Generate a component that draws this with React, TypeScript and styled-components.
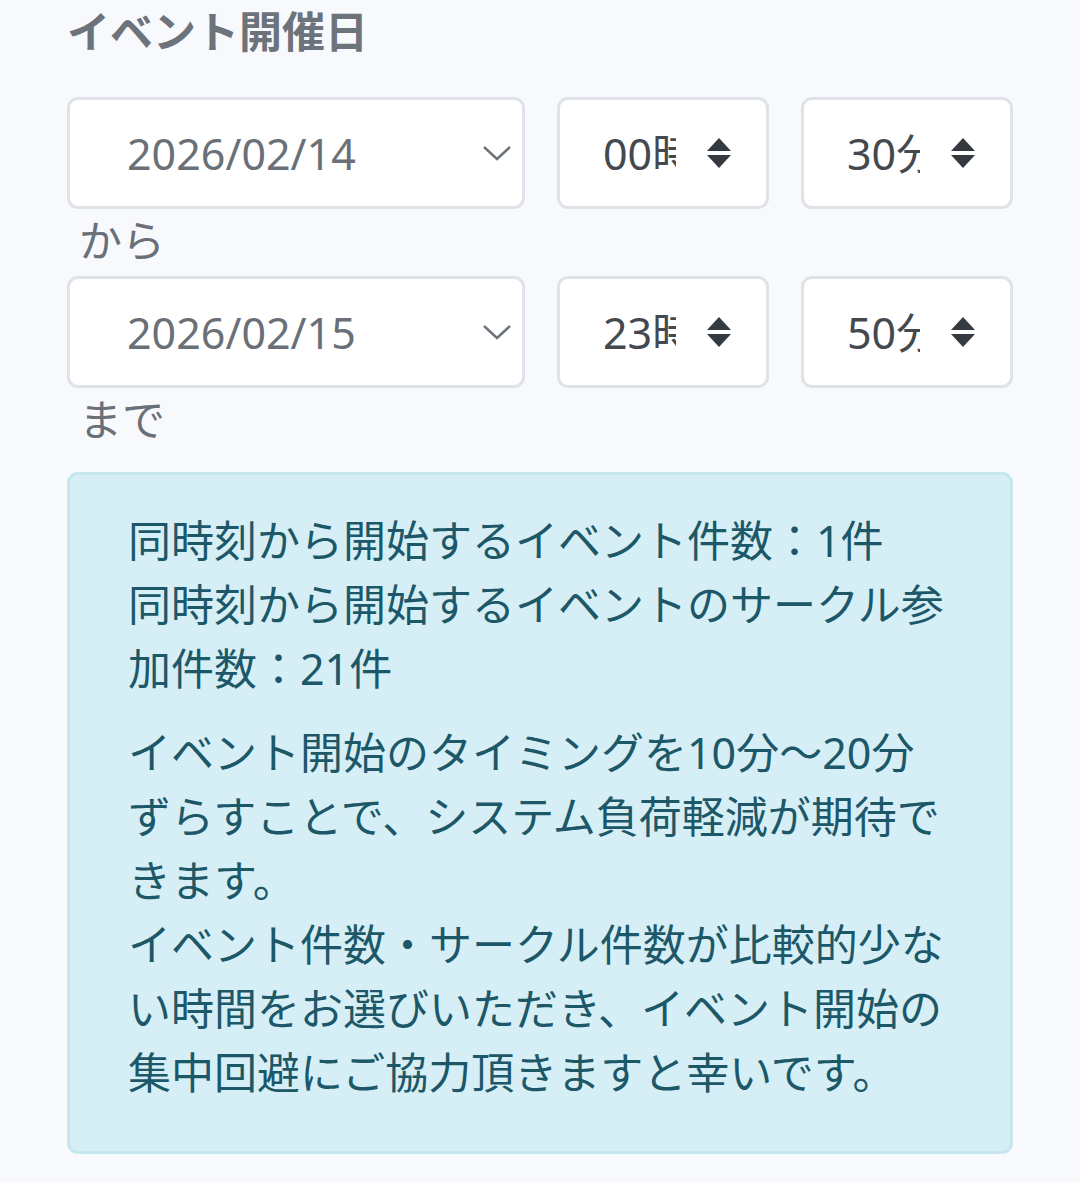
import React from "react";
import styled, {createGlobalStyle} from "styled-components";

const GlobalStyle = createGlobalStyle`
  html, body {
    margin: 0;
    padding: 0;
    background-color: #f8f9fd;
  }

  body {
    font-family: "Noto Sans", "Noto Sans CJK JP", sans-serif;
  }
`

const Page = styled.div`
  padding: 0 67px 32px 67px;
  font-size: 43px;
  line-height: 63px;
`

const Title = styled.h2`
  margin: 0 0 34px 0;
  font-size: 43px;
  font-weight: 700;
  line-height: 63px;
  color: #6c737a;
`

const Row = styled.div`
  display: grid;
  grid-template-columns: 1fr 212px 212px;
  gap: 32px;
  height: 112px;
`

const Field = styled.div`
  box-sizing: border-box;
  display: flex;
  align-items: center;
  height: 112px;
  background-color: #ffffff;
  border: 3px solid #dfe2e6;
  border-radius: 11px;
`

const DateField = styled(Field)`
  justify-content: space-between;
  padding: 0 10px 0 57px;
`

const DateText = styled.span`
  color: #6a7077;
`

const TimeField = styled(Field)`
  padding-left: 43px;
  gap: 30px;
`

const TimeText = styled.span`
  display: block;
  width: 73px;
  overflow: hidden;
  white-space: nowrap;
  color: #43494f;
`

const Label = styled.div<{ $after?: number }>`
  padding-left: 12px;
  color: #6a7077;
  margin-bottom: ${p => p.$after ?? 0}px;
`

const Notice = styled.div`
  box-sizing: border-box;
  padding: 34px 59px 46px 58px;
  background-color: #d6eff7;
  border: 3px solid #c4e6ee;
  border-radius: 11px;
  color: #1c5868;
  font-size: 43px;
  line-height: 64px;
`

const Paragraph = styled.p<{ $gap?: number }>`
  margin: 0 0 ${p => p.$gap ?? 0}px 0;
`

const Chevron: React.FC = () => (
    <svg width="30" height="16" viewBox="0 0 30 16">
        <path d="M2 2 L15 14 L28 2" fill="none" stroke="#6c737a" strokeWidth="2.4"/>
    </svg>
)

const Spinner: React.FC = () => (
    <svg width="26" height="32" viewBox="0 0 26 32">
        <path d="M13 1 L25 14 L1 14 Z" fill="#343a40"/>
        <path d="M1 18 L25 18 L13 31 Z" fill="#343a40"/>
    </svg>
)

type RangeRowProps = {
    date: string
    hour: string
    minute: string
}

const RangeRow: React.FC<RangeRowProps> = ({date, hour, minute}) => (
    <Row>
        <DateField>
            <DateText>{date}</DateText>
            <Chevron/>
        </DateField>
        <TimeField>
            <TimeText>{hour}時</TimeText>
            <Spinner/>
        </TimeField>
        <TimeField>
            <TimeText>{minute}分</TimeText>
            <Spinner/>
        </TimeField>
    </Row>
)

const App: React.FC = () => {
    return (
        <Page>
            <GlobalStyle/>
            <Title>イベント開催日</Title>
            <RangeRow date="2026/02/14" hour="00" minute="30"/>
            <Label $after={4}>から</Label>
            <RangeRow date="2026/02/15" hour="23" minute="50"/>
            <Label $after={21}>まで</Label>
            <Notice>
                <Paragraph $gap={20}>
                    同時刻から開始するイベント件数：1件<br/>
                    同時刻から開始するイベントのサークル参加件数：21件
                </Paragraph>
                <Paragraph>
                    イベント開始のタイミングを10分〜20分ずらすことで、システム負荷軽減が期待できます。<br/>
                    イベント件数・サークル件数が比較的少ない時間をお選びいただき、イベント開始の集中回避にご協力頂きますと幸いです。
                </Paragraph>
            </Notice>
        </Page>
    )
}

export default App
